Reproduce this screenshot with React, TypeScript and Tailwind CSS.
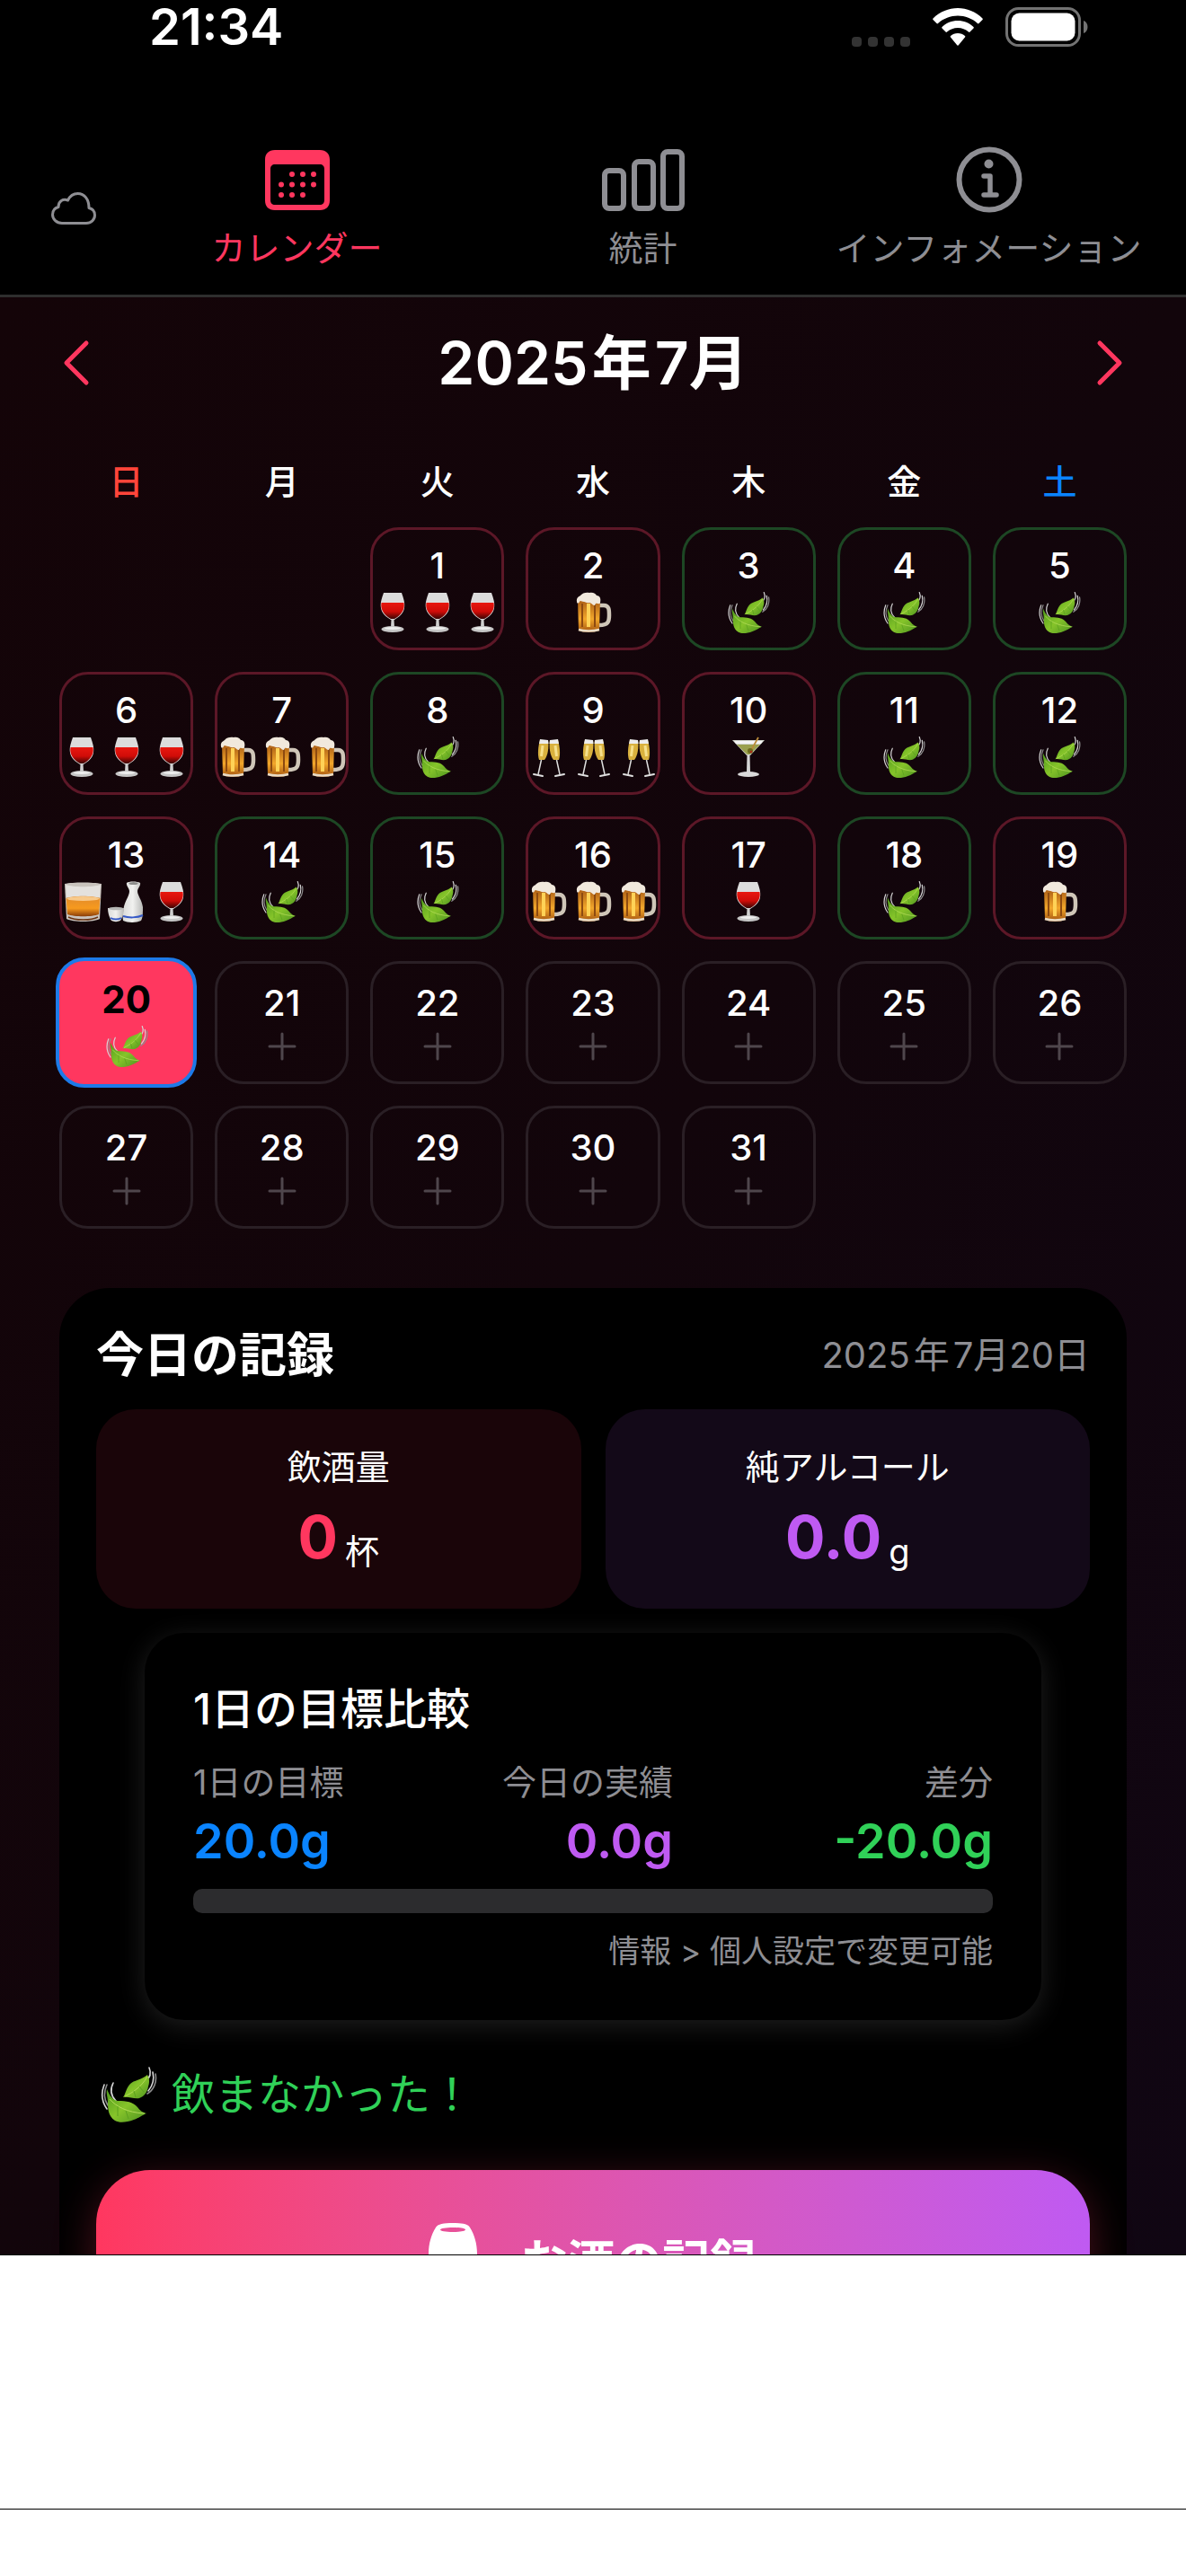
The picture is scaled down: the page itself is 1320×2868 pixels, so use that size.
import React, { useState } from "react";

type Drink = "wine" | "beer" | "champagne" | "martini" | "whisky" | "sake";

type DayRecord = {
  day: number;
  // undefined = nothing recorded yet, [] = a day without alcohol
  drinks?: Drink[];
};

const weekdays = ["日", "月", "火", "水", "木", "金", "土"];

// July 2025 starts on a Tuesday
const leadingBlanks = 2;

const records: Record<number, Drink[]> = {
  1: ["wine", "wine", "wine"],
  2: ["beer"],
  3: [],
  4: [],
  5: [],
  6: ["wine", "wine", "wine"],
  7: ["beer", "beer", "beer"],
  8: [],
  9: ["champagne", "champagne", "champagne"],
  10: ["martini"],
  11: [],
  12: [],
  13: ["whisky", "sake", "wine"],
  14: [],
  15: [],
  16: ["beer", "beer", "beer"],
  17: ["wine"],
  18: [],
  19: ["beer"],
  20: [],
};

const days: DayRecord[] = Array.from({ length: 31 }, (_, i) => ({
  day: i + 1,
  drinks: records[i + 1],
}));

/* ---------- icons ---------- */

// Gradients shared by all of the drink icons
const IconDefs = () => (
  <svg className="absolute h-0 w-0" aria-hidden="true">
    <defs>
      <linearGradient id="red" x1="0" y1="0" x2="0" y2="1">
        <stop offset="0" stopColor="#e8170f" />
        <stop offset="0.55" stopColor="#d00c08" />
        <stop offset="1" stopColor="#3a0503" />
      </linearGradient>
      <linearGradient id="beer" x1="0" y1="0" x2="0" y2="1">
        <stop offset="0" stopColor="#a85a14" />
        <stop offset="0.6" stopColor="#f2a72b" />
        <stop offset="1" stopColor="#a4540f" />
      </linearGradient>
      <linearGradient id="leaf" x1="0" y1="0" x2="1" y2="1">
        <stop offset="0" stopColor="#4f9a1c" />
        <stop offset="0.5" stopColor="#86c42a" />
        <stop offset="1" stopColor="#4c9220" />
      </linearGradient>
      <linearGradient id="whisky" x1="0" y1="0" x2="0" y2="1">
        <stop offset="0" stopColor="#e08a2c" />
        <stop offset="0.6" stopColor="#f79a1e" />
        <stop offset="1" stopColor="#8a3d08" />
      </linearGradient>
      <linearGradient id="china" x1="0" y1="0" x2="1" y2="0">
        <stop offset="0" stopColor="#d9dad8" />
        <stop offset="0.5" stopColor="#f1f1ef" />
        <stop offset="1" stopColor="#b9bab8" />
      </linearGradient>
    </defs>
  </svg>
);

const LeafIcon = ({ className }: { className: string }) => (
  <svg viewBox="0 0 64 64" className={className} fill="none" aria-hidden="true">
    <g stroke="#d5d5d5" strokeWidth="1.6" strokeLinecap="round">
      <path d="M5 21C1 31 3 41 8 48" />
      <path d="M8 21C4 30 5 38 9 44" stroke="#8d8d8d" />
      <path d="M15 19C11 27 13 34 18 39" />
      <path d="M55 2C58 9 55 14 51 17" />
      <path d="M59 7C61 15 59 22 54 28" />
      <path d="M62 9C64 18 60 27 53 31" stroke="#8d8d8d" />
    </g>
    <path
      d="M8 26C11 33 14 38 20 39C30 39 37 40 42 46C45 50 48 52 52 53C47 55 44 58 38 60C30 63 22 64 17 61C9 56 9 47 9 40C9 35 7 31 8 26Z"
      fill="url(#leaf)"
    />
    <path
      d="M26 35C29 31 29 25 34 20C38 16 46 16 53 10C55 14 56 17 54 23C53 29 50 34 44 36C38 37 32 34 26 35Z"
      fill="url(#leaf)"
    />
    <path d="M11 37C18 45 30 52 50 53M28 34C36 30 46 24 53 12" stroke="#b4dc5a" strokeWidth="1" />
    <path d="M20 45L20 56M29 50L32 59M38 28L40 35M44 23L49 29" stroke="#5ba01f" strokeWidth="1" />
  </svg>
);

const drinkShapes: Record<Drink, React.ReactNode> = {
  wine: (
    <>
      <path d="M14 2H34C36 8 38 13 37 19C36 25 31 29 26 32H22C17 29 12 25 11 19C10 13 12 8 14 2Z" fill="#dcdcdc" />
      <path d="M11.500 13H36.500C38 21 33 27 26 31H22C15 27 10 21 11.500 13Z" fill="url(#red)" />
      <path d="M22.500 31H25.500L26 41H22Z" fill="#d0d0d0" />
      <ellipse cx="24" cy="42.500" rx="12.500" ry="3.500" fill="#c6c6c6" />
      <ellipse cx="24" cy="41.500" rx="9" ry="1.500" fill="#eeeeee" />
    </>
  ),
  beer: (
    <>
      <path d="M31 16H36C42 16 42 21 42 27C42 34 41 38 31 38" fill="none" stroke="#cfc6b8" strokeWidth="4.500" />
      <path d="M7 9H32L31 44C24 46.500 14 46.500 8 44Z" fill="url(#beer)" />
      <path d="M12 14V40M26 14V40" stroke="#8d4a10" strokeWidth="2" />
      <path d="M19 14V40" stroke="#ffd257" strokeWidth="4" />
      <path d="M8 43C14 45 24 45 31 43" stroke="#e9dcc6" strokeWidth="2.500" fill="none" />
      <path
        d="M6 12C5 7 9 6 10 5C12 2 17 1 20 2C24 1 27 3 28 5C32 5 33 9 32 13C31 16 29 13 27 14C25 19 23 13 20 13C17 14 16 12 14 12C11 12 10 10 9 12C8 14 6 14 6 12Z"
        fill="#f1e9dd"
      />
    </>
  ),
  champagne: (
    <>
      <path d="M15 5L24 5C25 13 24 22 20 27H14C12 21 13 12 15 5Z" fill="#d9b13e" />
      <path d="M35 5L26 5C25 13 26 22 30 27H36C38 21 37 12 35 5Z" fill="#d9b13e" />
      <path d="M15 4L24 5L24.500 9L14 9ZM35 4L26 5L25.500 9L36 9Z" fill="#ededed" />
      <path d="M18 11L16.500 23M32 11L33.500 23" stroke="#f6e08c" strokeWidth="3" />
      <path d="M16.500 27L13 43M33.500 27L37 43" stroke="#dedede" strokeWidth="1.500" />
      <path d="M8 43L18 45M42 43L32 45" stroke="#e0e0e0" strokeWidth="2" strokeLinecap="round" />
    </>
  ),
  martini: (
    <>
      <path d="M6 5H42L26 22H22Z" fill="#cfd3c9" />
      <path d="M11 10H37L25.500 21H22.500Z" fill="#9aa04d" />
      <path d="M8 6H40L38 9H10Z" fill="#f4f4f4" />
      <path d="M35 2L26 18" stroke="#b98b3a" strokeWidth="1.800" />
      <circle cx="26" cy="17" r="3" fill="#6d6a1d" />
      <circle cx="27" cy="18" r="1.200" fill="#b1271b" />
      <path d="M22.500 21H25.500L26 41H22Z" fill="#d6d6d6" />
      <ellipse cx="24" cy="43" rx="12" ry="3" fill="#dadada" />
    </>
  ),
  whisky: (
    <>
      <path d="M5 4C14 2 36 2 46 4L44 43C37 47 14 47 7 43Z" fill="#c9c3bd" />
      <path d="M6 5C15 8 36 8 45 5L44 19H7Z" fill="#e4e1de" />
      <path d="M6.500 20C15 17 36 17 44.500 20L43 38C35 41 16 41 8 38Z" fill="url(#whisky)" />
      <ellipse cx="25.500" cy="20.500" rx="18" ry="2.500" fill="#f8c98b" />
      <path d="M9 41C16 45 35 45 42 41" fill="none" stroke="#6a3413" strokeWidth="1.500" />
    </>
  ),
  sake: (
    <>
      <path
        d="M24 3C26 1 36 1 39 3C40 6 36 9 36 12C36 17 41 22 42 30C42 36 42 42 40 45C35 47.500 25 47.500 20 45C19 40 20 34 21 29C23 22 27 17 27 12C27 9 23 6 24 3Z"
        fill="url(#china)"
      />
      <ellipse cx="31.500" cy="3.500" rx="5" ry="1.500" fill="#8c8c8a" />
      <path d="M20 40C26 42 36 42 42 39" fill="none" stroke="#3559c7" strokeWidth="2" />
      <path d="M3 31H21C21 37 19 42 17 45C14 46.500 10 46.500 7 45C5 42 3 37 3 31Z" fill="url(#china)" />
      <ellipse cx="12" cy="31.500" rx="8" ry="1.800" fill="#b5b6b4" />
      <path d="M6 42C9 44 15 44 18 42" fill="none" stroke="#3559c7" strokeWidth="2" />
    </>
  ),
};

const DrinkIcon = ({ drink }: { drink: Drink }) => (
  <svg viewBox="0 0 48 48" className="size-12 shrink-0" aria-hidden="true">
    {drinkShapes[drink]}
  </svg>
);

const PlusIcon = () => (
  <svg viewBox="0 0 40 40" className="size-10" aria-hidden="true">
    <path d="M20 6V34M6 20H34" stroke="#4f464c" strokeWidth="3" strokeLinecap="round" />
  </svg>
);

const CalendarIcon = () => (
  <svg viewBox="0 0 74 74" className="size-[74px]" aria-hidden="true">
    <path
      fillRule="evenodd"
      fill="currentColor"
      d="M12 4H62C69 4 73 8 73 15V60C73 67 69 71 62 71H12C5 71 1 67 1 60V15C1 8 5 4 12 4ZM12 20C9 20 7 22 7 25V60C7 63 9 65 12 65H62C65 65 67 63 67 60V25C67 22 65 20 62 20Z"
    />
    <path
      d="M31 31H31.010M43 31H43.010M55 31H55.010M19 42.500H19.010M31 42.500H31.010M43 42.500H43.010M55 42.500H55.010M19 54H19.010M31 54H31.010M43 54H43.010"
      stroke="currentColor"
      strokeWidth="6"
      strokeLinecap="round"
    />
  </svg>
);

const ChartIcon = () => (
  <svg viewBox="0 0 94 74" className="h-[74px] w-[94px]" fill="none" stroke="currentColor" strokeWidth="6" aria-hidden="true">
    <rect x="4" y="27" width="21" height="42" rx="5" />
    <rect x="37" y="17" width="21" height="52" rx="5" />
    <rect x="69" y="6" width="21" height="63" rx="5" />
  </svg>
);

const InfoIcon = () => (
  <svg viewBox="0 0 74 74" className="size-[74px]" fill="none" stroke="currentColor" strokeLinecap="round" strokeLinejoin="round" aria-hidden="true">
    <circle cx="37" cy="37" r="33.500" strokeWidth="6" />
    <circle cx="36.500" cy="19.500" r="5" fill="currentColor" stroke="none" />
    <path d="M31 33H38V54M31 54H45" strokeWidth="5.500" />
  </svg>
);

const CloudIcon = () => (
  <svg viewBox="0 0 50 36" className="h-9 w-[50px]" fill="none" stroke="#8e8e93" strokeWidth="3" strokeLinejoin="round" aria-hidden="true">
    <path d="M12 34.500C6 34.500 1.500 30 1.500 25C1.500 20.500 4 17.500 8 16.500C8 10 13 7 18.500 9C21 4 25 1.500 29.500 1.500C37 1.500 42 8 42 17.500C46 18.500 48.500 21.500 48.500 25.500C48.500 30.500 44.500 34.500 39 34.500Z" />
  </svg>
);

const WifiIcon = () => (
  <svg viewBox="0 0 56 42" className="h-[42px] w-14" fill="#fff" aria-hidden="true">
    <path d="M28 0C38 0 48 4 55.500 11.500C56 12 56 12.500 55.500 13L51.500 17C51 17.500 50.500 17.500 50 17C44 11.500 36 8.500 28 8.500C20 8.500 12 11.500 6 17C5.500 17.500 5 17.500 4.500 17L0.500 13C0 12.500 0 12 0.500 11.500C8 4 18 0 28 0Z" />
    <path d="M28 14C34.500 14 41 16.500 45.500 21C46 21.500 46 22 45.500 22.500L41.500 26.500C41 27 40.500 27 40 26.500C36.500 23.500 32.500 22 28 22C23.500 22 19.500 23.500 16 26.500C15.500 27 15 27 14.500 26.500L10.500 22.500C10 22 10 21.500 10.500 21C15 16.500 21.500 14 28 14Z" />
    <path d="M28 28C31 28 34 29 36 31C36.500 31.500 36.500 32 36 32.500L29 41C28.500 42 27.500 42 27 41L20 32.500C19.500 32 19.500 31.500 20 31C22 29 25 28 28 28Z" />
  </svg>
);

const BatteryIcon = () => (
  <svg viewBox="0 0 92 44" className="h-11 w-[92px]" aria-hidden="true">
    <rect x="1.500" y="1.500" width="81" height="41" rx="13" fill="none" stroke="#737373" strokeWidth="3" />
    <rect x="6.500" y="6.500" width="71" height="31" rx="9" fill="#fff" />
    <path d="M87 15C93 17 93 27 87 29Z" fill="#737373" />
  </svg>
);

const Chevron = ({ d }: { d: string }) => (
  <svg viewBox="0 0 34 52" className="h-[52px] w-[34px]" fill="none" stroke="#ff375f" strokeWidth="5" strokeLinecap="round" strokeLinejoin="round" aria-hidden="true">
    <path d={d} />
  </svg>
);

const CupIcon = () => (
  <svg viewBox="0 0 54 88" className="h-[88px] w-[54px]" aria-hidden="true">
    <path
      fillRule="evenodd"
      fill="#fff"
      d="M27 0C37 0 44 1 46 5C51 13 54 23 54 34V70C54 82 46 88 27 88C8 88 0 82 0 70V34C0 23 3 13 8 5C10 1 17 0 27 0ZM27 5C19 5 13 6 13 7.500C13 9 19 10 27 10C35 10 41 9 41 7.500C41 6 35 5 27 5Z"
    />
  </svg>
);

/* ---------- parts ---------- */

const StatusBar = () => (
  <div className="flex h-15 items-center justify-between pr-[109px] pl-[166px]">
    <span className="text-[56px] leading-[60px] font-semibold">21:34</span>
    <div className="flex items-center gap-[25px]">
      <div className="flex gap-[7px] pt-8">
        {[0, 1, 2, 3].map((i) => (
          <span key={i} className="h-[11px] w-[11px] rounded-[4px] bg-[#333333]" />
        ))}
      </div>
      <WifiIcon />
      <BatteryIcon />
    </div>
  </div>
);

const tabs = [
  { id: "calendar", label: "カレンダー", icon: <CalendarIcon /> },
  { id: "stats", label: "統計", icon: <ChartIcon /> },
  { id: "info", label: "インフォメーション", icon: <InfoIcon /> },
];

// 年 gets a little air on both sides, the numerals around it are tight
const Year = ({ value }: { value: number }) => (
  <>
    {value}
    <span className="mx-1">年</span>
  </>
);

const DayCell = ({
  record,
  selected,
  onSelect,
}: {
  record: DayRecord;
  selected: boolean;
  onSelect: () => void;
}) => {
  const { day, drinks } = record;

  let look = "border-3 border-[#2a1f25]";
  if (drinks) {
    look = drinks.length > 0 ? "border-3 border-[#5c1727]" : "border-3 border-[#1d4724]";
  }
  if (selected) {
    look = "-m-1 border-4 border-[#1d7ae8] bg-[#ff375f] text-black";
  }

  return (
    <button
      onClick={onSelect}
      className={`flex flex-col items-center justify-center gap-1 rounded-[32px] ${look}`}
    >
      <span
        className={
          selected
            ? "text-[42px] leading-[48px] font-bold"
            : "text-[40px] leading-[48px] font-medium"
        }
      >
        {day}
      </span>
      {!drinks && <PlusIcon />}
      {drinks && drinks.length === 0 && <LeafIcon className="size-12" />}
      {drinks && drinks.length > 0 && (
        <span className="flex justify-center gap-[2px]">
          {drinks.map((drink, i) => (
            <DrinkIcon key={i} drink={drink} />
          ))}
        </span>
      )}
    </button>
  );
};

const StatCard = ({
  label,
  value,
  unit,
  cardClass,
  valueClass,
}: {
  label: string;
  value: string;
  unit: string;
  cardClass: string;
  valueClass: string;
}) => (
  <div className={`flex flex-col items-center gap-[14px] rounded-[44px] py-10 ${cardClass}`}>
    <span className="text-[38px] leading-[48px]">{label}</span>
    <span className="flex items-end gap-2">
      <span className={`text-[66px] leading-[80px] font-bold ${valueClass}`}>{value}</span>
      <span className="text-[38px] leading-[48px]">{unit}</span>
    </span>
  </div>
);

const goalColumns = [
  { label: "1日の目標", value: "20.0g", align: "text-left", color: "text-[#0a84ff]" },
  { label: "今日の実績", value: "0.0g", align: "text-right", color: "text-[#bf5af2]" },
  { label: "差分", value: "-20.0g", align: "text-right", color: "text-[#30d158]" },
];

const GoalCard = () => (
  <section className="mx-[54px] mt-[27px] rounded-[44px] bg-black px-[54px] pt-[55px] pb-[53px] shadow-[0_6px_30px_rgba(255,255,255,0.12)]">
    <h3 className="text-[48px] leading-[60px] font-medium">1日の目標比較</h3>
    <dl className="mt-[27px] grid grid-cols-[3fr_3fr_4fr]">
      {goalColumns.map((col) => (
        <div key={col.label} className={`flex flex-col gap-[10px] whitespace-nowrap ${col.align}`}>
          <dt className="text-[38px] leading-[48px] text-[#8e8e93]">{col.label}</dt>
          <dd className={`text-[54px] leading-[64px] font-semibold ${col.color}`}>{col.value}</dd>
        </div>
      ))}
    </dl>
    <div className="mt-[21px] h-[27px] rounded-[10px] bg-[#2c2c2e]" />
    <p className="mt-[18px] text-right text-[35px] leading-[48px] text-[#8e8e93]">
      情報 &gt; 個人設定で変更可能
    </p>
  </section>
);

const App: React.FC = () => {
  const [tab, setTab] = useState("calendar");
  const [selectedDay, setSelectedDay] = useState(20);

  return (
    <div
      lang="ja"
      className="flex h-screen flex-col bg-white font-[Inter,'Noto_Sans_CJK_JP',sans-serif] text-white"
    >
      <IconDefs />

      <header className="border-b-3 border-[#2e2e2e] bg-black">
        <StatusBar />
        <nav className="flex items-center gap-[31px] pt-[103px] pr-[27px] pb-7 pl-[57px]">
          <button aria-label="iCloud" className="shrink-0">
            <CloudIcon />
          </button>
          <div className="grid flex-1 grid-cols-3">
            {tabs.map((t) => (
              <button
                key={t.id}
                onClick={() => setTab(t.id)}
                className={`flex flex-col items-center gap-[15px] ${
                  tab === t.id ? "text-[#ff375f]" : "text-[#8e8e93]"
                }`}
              >
                {t.icon}
                <span className="text-[38px] leading-[48px] whitespace-nowrap">{t.label}</span>
              </button>
            ))}
          </div>
        </nav>
      </header>

      <main className="min-h-0 flex-1 overflow-y-auto bg-linear-to-br from-[#140408] via-[#12050b] to-[#100613] px-[66px] pt-[33px] [scrollbar-width:none]">
        <div className="flex items-center justify-between">
          <button aria-label="前の月">
            <Chevron d="M30 4L8 26L30 48" />
          </button>
          <h1 className="text-[66px] leading-[80px] font-semibold">
            <Year value={2025} />
            7月
          </h1>
          <button aria-label="次の月">
            <Chevron d="M4 4L26 26L4 48" />
          </button>
        </div>

        <div className="mt-[68px] grid grid-cols-7 gap-6 text-center text-[38px] leading-[48px] font-medium">
          {weekdays.map((w) => (
            <span
              key={w}
              className={w === "日" ? "text-[#ff453a]" : w === "土" ? "text-[#0a84ff]" : ""}
            >
              {w}
            </span>
          ))}
        </div>

        <div className="mt-[27px] grid auto-rows-[137px] grid-cols-7 gap-6">
          {Array.from({ length: leadingBlanks }, (_, i) => (
            <span key={`blank-${i}`} />
          ))}
          {days.map((record) => (
            <DayCell
              key={record.day}
              record={record}
              selected={record.day === selectedDay}
              onSelect={() => setSelectedDay(record.day)}
            />
          ))}
        </div>

        <section className="mt-[66px] rounded-[56px] bg-black px-[41px] pt-[39px] pb-12">
          <div className="flex items-center justify-between">
            <h2 className="text-[53px] leading-[72px] font-bold">今日の記録</h2>
            <time dateTime="2025-07-20" className="text-[40px] leading-[48px] text-[#8e8e93]">
              <Year value={2025} />
              7月20日
            </time>
          </div>

          <div className="mt-6 grid grid-cols-2 gap-[27px]">
            <StatCard
              label="飲酒量"
              value="0"
              unit="杯"
              cardClass="bg-[#1a0509]"
              valueClass="text-[#ff375f]"
            />
            <StatCard
              label="純アルコール"
              value="0.0"
              unit="g"
              cardClass="bg-[#130918]"
              valueClass="text-[#bf5af2]"
            />
          </div>

          <GoalCard />

          <p className="mt-[51px] flex items-center gap-4 pl-1 text-[48px] leading-[64px] text-[#30d158]">
            <LeafIcon className="size-16" />
            飲まなかった！
          </p>

          <button className="mt-[52px] flex w-full items-center justify-center gap-12 rounded-[60px] bg-linear-to-r from-[#ff375f] to-[#bf5af2] py-[59px] text-[53px] leading-[72px] font-bold shadow-[0_12px_48px_rgba(255,55,95,0.3)]">
            <CupIcon />
            お酒の記録
          </button>
        </section>
      </main>

      {/* empty banner slot below the scroll area */}
      <footer className="border-t border-black bg-white">
        <div className="h-[283px] border-b border-black" />
        <div className="h-[74px]" />
      </footer>
    </div>
  );
};

export default App;
